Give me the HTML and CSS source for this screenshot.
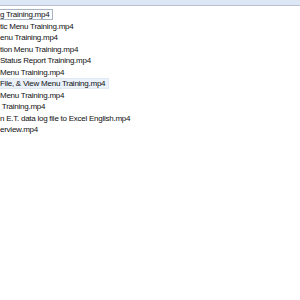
FILE: index.html
```html
<!DOCTYPE html>
<html>
<head>
<meta charset="utf-8">
<link rel="stylesheet" href="styles.css">
</head>
<body>
<div class="header"></div>
<ul class="files">
  <li class="row focus"><span class="name">g Training.mp4</span></li>
  <li class="row"><span class="name">tic Menu Training.mp4</span></li>
  <li class="row"><span class="name">enu Training.mp4</span></li>
  <li class="row"><span class="name">tion Menu Training.mp4</span></li>
  <li class="row"><span class="name">Status Report Training.mp4</span></li>
  <li class="row"><span class="name">Menu Training.mp4</span></li>
  <li class="row hover"><span class="name">File, &amp; View Menu Training.mp4</span></li>
  <li class="row"><span class="name">Menu Training.mp4</span></li>
  <li class="row"><span class="name"> Training.mp4</span></li>
  <li class="row"><span class="name">n E.T. data log file to Excel English.mp4</span></li>
  <li class="row"><span class="name">erview.mp4</span></li>
</ul>
</body>
</html>
```
FILE: styles.css
```css
html, body {
  margin: 0;
  padding: 0;
  background: #ffffff;
  width: 300px;
  height: 300px;
  overflow: hidden;
}
body {
  font-family: "Liberation Sans", Arial, sans-serif;
  font-size: 8px;
  letter-spacing: -0.25px;
  color: #111111;
}
.header {
  height: 5px;
  background: #dce6f4;
  border-bottom: 1px solid #b8c0cc;
}
.files {
  list-style: none;
  margin: 0;
  padding: 3px 0 0 0;
  display: flex;
  flex-direction: column;
  gap: 0.5px;
}
.row {
  display: flex;
  height: 11px;
  line-height: 11px;
}
.name {
  white-space: pre;
  padding-right: 3px;
  border: 1px solid transparent;
  border-left: none;
  line-height: 9px;
}
.focus .name {
  border-color: #a5b3c4;
  background: #fafcff;
}
.hover .name {
  background: #eaf1fb;
  border-color: #e1e9f5;
}
```
